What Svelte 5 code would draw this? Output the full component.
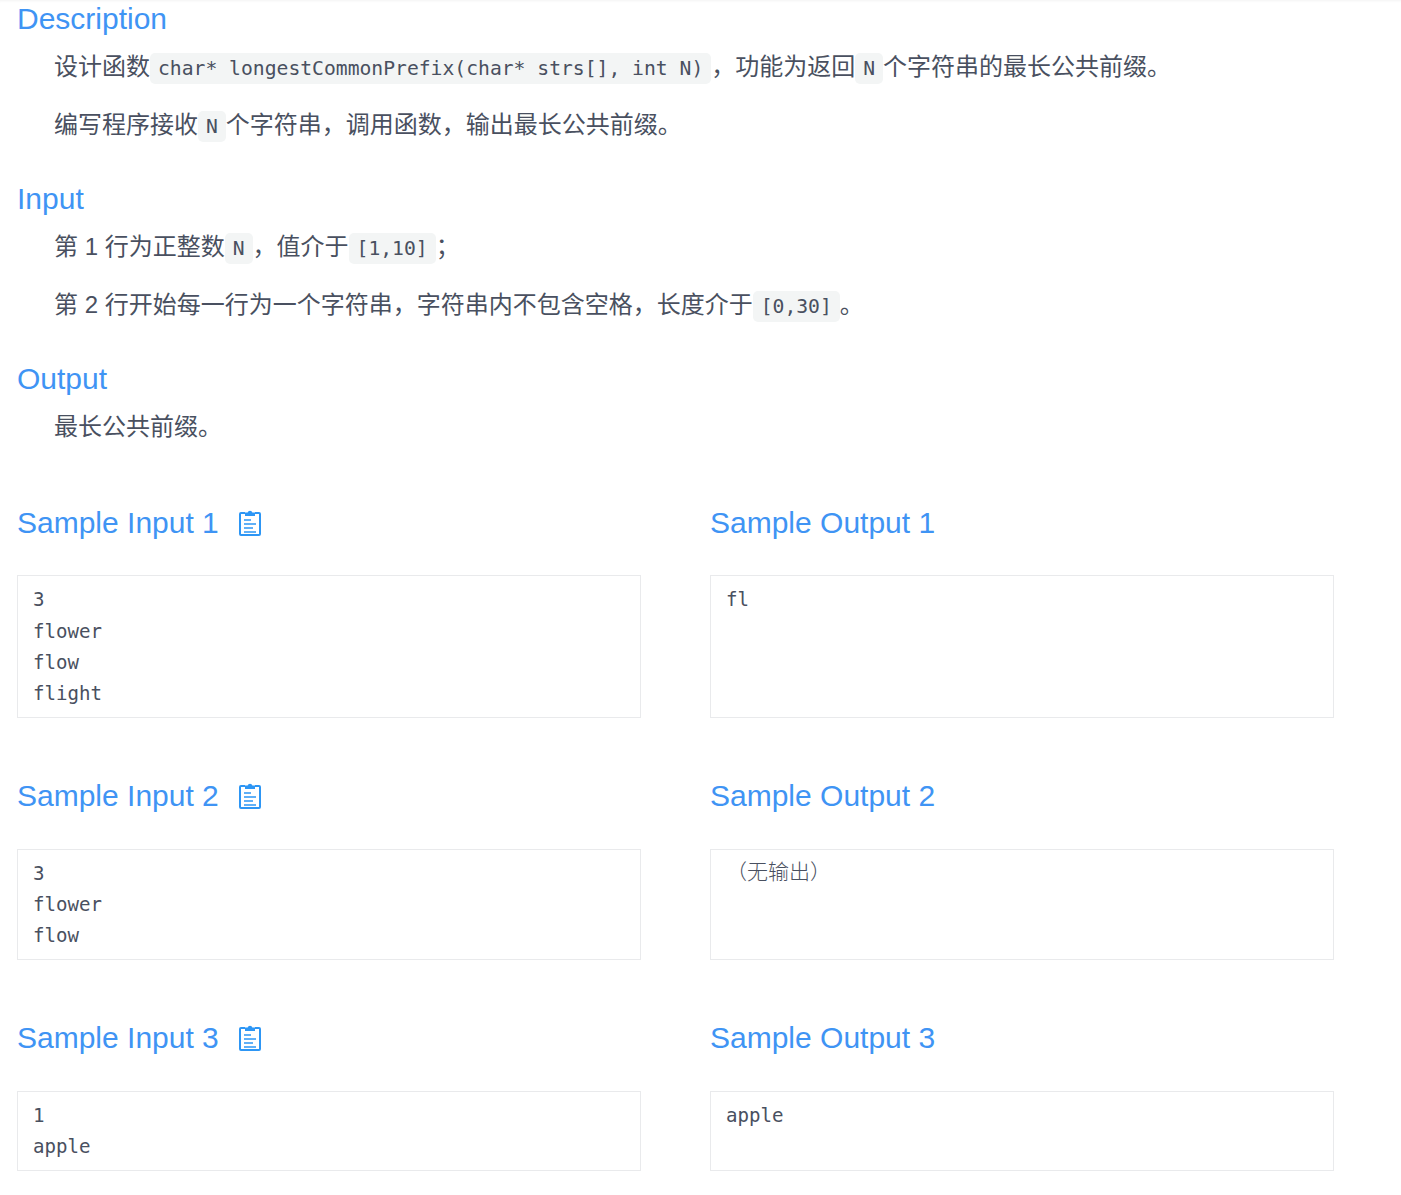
<script>
  const samples = [
    { n: 1, input: '3\nflower\nflow\nflight', output: 'fl' },
    { n: 2, input: '3\nflower\nflow', output: '（无输出）', cjk: true },
    { n: 3, input: '1\napple', output: 'apple' }
  ];
</script>

<div class="page">
  <section>
    <h2>Description</h2>
    <p>设计函数<code>char* longestCommonPrefix(char* strs[], int N)</code>，功能为返回<code>N</code>个字符串的最长公共前缀。</p>
    <p>编写程序接收<code>N</code>个字符串，调用函数，输出最长公共前缀。</p>
  </section>
  <section>
    <h2>Input</h2>
    <p>第 1 行为正整数<code>N</code>，值介于<code>[1,10]</code>；</p>
    <p>第 2 行开始每一行为一个字符串，字符串内不包含空格，长度介于<code>[0,30]</code>。</p>
  </section>
  <section>
    <h2>Output</h2>
    <p>最长公共前缀。</p>
  </section>

  <div class="samples">
    {#each samples as s}
      <div class="cell">
        <h2 class="sample-title">
          <span>Sample Input {s.n}</span>
          <svg class="copy" width="22" height="26" viewBox="0 0 22 26" aria-hidden="true">
            <path d="M6 3H2a1 1 0 0 0-1 1v20a1 1 0 0 0 1 1h18a1 1 0 0 0 1-1V4a1 1 0 0 0-1-1h-4" fill="none" stroke="currentColor" stroke-width="2"/>
            <path d="M6 2.500h2.600a2.500 2.500 0 0 1 4.800 0H16V6H6z" fill="currentColor"/>
            <path d="M5 10h7M5 14h12M5 18h9M5 22h12" fill="none" stroke="currentColor" stroke-width="1.700"/>
          </svg>
        </h2>
        <pre>{s.input}</pre>
      </div>
      <div class="cell">
        <h2 class="sample-title"><span>Sample Output {s.n}</span></h2>
        <pre class:cjk={s.cjk}>{s.output}</pre>
      </div>
    {/each}
  </div>
</div>

<style>
  :global(body) {
    margin: 0;
    background: #fff;
  }
  .page {
    box-sizing: border-box;
    width: 1401px;
    height: 1195px;
    padding: 1px 67px 0 17px;
    font-family: "Liberation Sans", "Noto Sans CJK SC", sans-serif;
    color: #495060;
    box-shadow: inset 0 3px 3px -2px rgba(0, 0, 0, 0.05);
  }
  section {
    padding-bottom: 17px;
  }
  h2 {
    margin: 0 0 11px;
    font-size: 30px;
    line-height: 36px;
    font-weight: 400;
    color: #3f94f4;
  }
  p {
    margin: 0 0 20px;
    padding-left: 37px;
    font-size: 24px;
    line-height: 38px;
  }
  code {
    padding: 4px 8px;
    border-radius: 5px;
    background: #f3f5f5;
    font-family: "DejaVu Sans Mono", monospace;
    font-size: 19.7px;
    line-height: 1;
  }
  .samples {
    display: grid;
    grid-template-columns: 624px 624px;
    column-gap: 69px;
    row-gap: 60px;
    margin-top: 22px;
  }
  .sample-title {
    display: flex;
    align-items: center;
    margin-bottom: 34.4px;
  }
  .copy {
    margin-left: 20px;
    color: #2d96f5;
  }
  pre {
    margin: 0;
    padding: 8px 15px;
    border: 1px solid #e9eaec;
    font-family: "DejaVu Sans Mono", monospace;
    font-size: 19.1px;
    line-height: 31.2px;
    color: #495060;
  }
  .cell {
    display: flex;
    flex-direction: column;
  }
  .cell pre {
    flex: 1;
  }
  pre.cjk {
    font-family: "Noto Sans CJK SC", serif;
    font-weight: 300;
    font-size: 21px;
    line-height: 24px;
  }
</style>
